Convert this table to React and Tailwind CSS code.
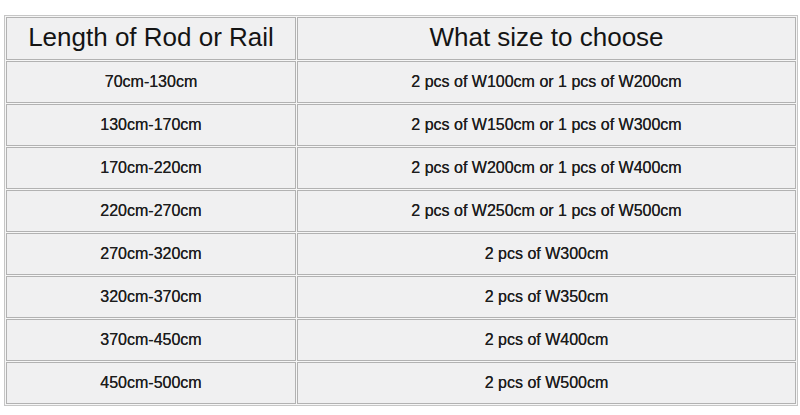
const rows = [
  ["70cm-130cm", "2 pcs of W100cm or 1 pcs of W200cm"],
  ["130cm-170cm", "2 pcs of W150cm or 1 pcs of W300cm"],
  ["170cm-220cm", "2 pcs of W200cm or 1 pcs of W400cm"],
  ["220cm-270cm", "2 pcs of W250cm or 1 pcs of W500cm"],
  ["270cm-320cm", "2 pcs of W300cm"],
  ["320cm-370cm", "2 pcs of W350cm"],
  ["370cm-450cm", "2 pcs of W400cm"],
  ["450cm-500cm", "2 pcs of W500cm"],
];

const cell =
  "flex items-center justify-center border border-[#b2b2b2] bg-[#f0f0f1]";

export default function App() {
  return (
    <div className="w-[800px] h-[415px] bg-white pt-[15px] pl-[4px] font-['Liberation_Sans',Arial,sans-serif]">
      {/* size table */}
      <div className="w-[794px] border border-[#c6c6c6] bg-[#f6f6f6] p-[1px] grid grid-cols-[290px_1fr] gap-[1px]">
        <div className={`${cell} h-[43px] pb-[3px] text-[26px] text-[#141414]`}>
          Length of Rod or Rail
        </div>
        <div className={`${cell} h-[43px] pb-[3px] text-[26px] text-[#141414]`}>
          What size to choose
        </div>
        {rows.map(([length, size]) => (
          <div key={length} className="contents">
            <div className={`${cell} h-[42px] text-[16px] text-[#1c1c1c] [text-shadow:0_0_0.4px_#333]`}>
              {length}
            </div>
            <div className={`${cell} h-[42px] text-[16px] text-[#1c1c1c] [text-shadow:0_0_0.4px_#333]`}>
              {size}
            </div>
          </div>
        ))}
      </div>
    </div>
  );
}
